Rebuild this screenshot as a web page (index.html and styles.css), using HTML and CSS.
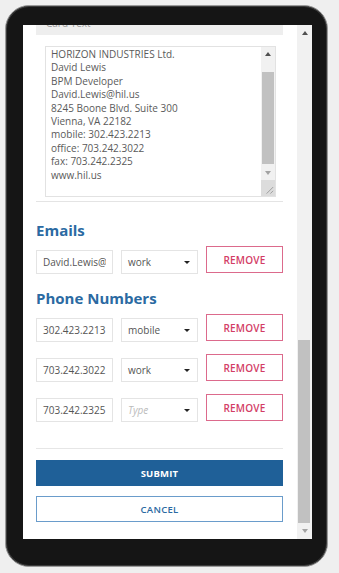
FILE: index.html
```html
<!DOCTYPE html>
<html>
<head>
<meta charset="utf-8">
<link rel="stylesheet" href="styles.css">
</head>
<body>
<div class="device">
  <div class="screen">
    <div class="content">
      <div class="card">
        <div class="card-head">Card Text</div>
        <div class="card-body">
          <div class="textarea">
            <div class="ta-text">HORIZON INDUSTRIES Ltd.<br>David Lewis<br>BPM Developer<br>David.Lewis@hil.us<br>8245 Boone Blvd. Suite 300<br>Vienna, VA 22182<br>mobile: 302.423.2213<br>office: 703.242.3022<br>fax: 703.242.2325<br>www.hil.us</div>
            <div class="ta-scroll">
              <div class="sb-btn"><span class="tri-up"></span></div>
              <div class="ta-track"><div class="ta-thumb"></div></div>
              <div class="sb-btn"><span class="tri-down"></span></div>
              <div class="resize">
                <svg width="15" height="16" viewBox="0 0 15 16"><path d="M6 14 L13 7 M10 14 L13 11" stroke="#9a9a9a" stroke-width="1" fill="none"/></svg>
              </div>
            </div>
          </div>
        </div>
      </div>

      <h2 class="section-title first">Emails</h2>
      <div class="row">
        <div class="field"><span class="clip">David.Lewis@hil.us</span></div>
        <div class="field select"><span>work</span><span class="caret"></span></div>
        <div class="btn-remove">REMOVE</div>
      </div>

      <h2 class="section-title">Phone Numbers</h2>
      <div class="row">
        <div class="field"><span>302.423.2213</span></div>
        <div class="field select"><span>mobile</span><span class="caret"></span></div>
        <div class="btn-remove">REMOVE</div>
      </div>
      <div class="row">
        <div class="field"><span>703.242.3022</span></div>
        <div class="field select"><span>work</span><span class="caret"></span></div>
        <div class="btn-remove">REMOVE</div>
      </div>
      <div class="row">
        <div class="field"><span>703.242.2325</span></div>
        <div class="field select"><span class="placeholder">Type</span><span class="caret"></span></div>
        <div class="btn-remove">REMOVE</div>
      </div>

      <div class="divider"></div>
      <div class="btn-submit">SUBMIT</div>
      <div class="btn-cancel">CANCEL</div>
    </div>
    <div class="page-scroll">
      <div class="sb-btn"><span class="tri-up"></span></div>
      <div class="track"><div class="thumb"></div></div>
      <div class="sb-btn"><span class="tri-down"></span></div>
    </div>
  </div>
</div>
</body>
</html>
```
FILE: styles.css
```css
* { box-sizing: border-box; }
html, body { margin: 0; padding: 0; }
body {
  background: #efefef;
  font-family: "Open Sans", "Liberation Sans", sans-serif;
  width: 339px;
  height: 573px;
  overflow: hidden;
}
.device {
  margin: 5px 0 0 5px;
  width: 323px;
  height: 562px;
  background: #151515;
  border: 1px solid #9a9a9a;
  box-shadow: inset 0 0 0 1px #3a3a3a;
  border-radius: 24px;
  padding: 19px 15px 27px 17px;
}
.screen {
  display: flex;
  width: 289px;
  height: 514px;
  background: #fff;
  overflow: hidden;
}
.content {
  flex: 1;
  overflow: hidden;
  padding: 0 14px 0 13px;
}
.card {
  margin-top: -14px;
  border-bottom: 1px solid #e4e4e4;
}
.card-head {
  height: 24px;
  background: #eeeeee;
  color: #9a9a9a;
  font-size: 10px;
  line-height: 24px;
  padding-left: 10px;
  overflow: hidden;
}
.card-body {
  padding: 11px 7px 4px 9px;
}
.textarea {
  display: flex;
  height: 151px;
  border: 1px solid #e2e2e2;
}
.ta-text {
  flex: 1;
  font-size: 10px;
  line-height: 13.4px;
  color: #5a5a5a;
  padding: 1px 4px 0 5px;
  white-space: nowrap;
  overflow: hidden;
}
.ta-scroll {
  width: 14px;
  display: flex;
  flex-direction: column;
  background: #f1f1f1;
}
.ta-track {
  height: 111px;
  padding-top: 11px;
}
.ta-thumb {
  height: 92px;
  margin: 0 1px;
  background: #c1c1c1;
}
.resize {
  flex: 1;
  background: #dcdcdc;
  display: flex;
  align-items: flex-end;
  justify-content: flex-end;
}
.resize svg { display: block; }
.sb-btn {
  height: 15px;
  display: flex;
  align-items: center;
  justify-content: center;
}
.tri-up {
  width: 0; height: 0;
  border-left: 3.5px solid transparent;
  border-right: 3.5px solid transparent;
  border-bottom: 4px solid #505050;
}
.tri-down {
  width: 0; height: 0;
  border-left: 3.5px solid transparent;
  border-right: 3.5px solid transparent;
  border-top: 4px solid #a3a3a3;
}
.section-title {
  margin: 13px 0 5px;
  font-size: 15px;
  line-height: 22px;
  font-weight: 700;
  color: #2b6aa2;
}
.section-title.first { margin-top: 17px; }
.row {
  display: grid;
  grid-template-columns: repeat(3, minmax(0, 1fr));
  column-gap: 8px;
  align-items: start;
  margin-bottom: 12px;
}
.field {
  height: 24px;
  margin-top: 4px;
  border: 1px solid #e4e4e4;
  font-size: 10px;
  color: #555;
  padding: 0 6px;
  display: flex;
  align-items: center;
  overflow: hidden;
  white-space: nowrap;
}
.field .clip { flex: 1; min-width: 0; overflow: hidden; }
.select { justify-content: space-between; }
.caret {
  width: 0; height: 0;
  border-left: 3px solid transparent;
  border-right: 3px solid transparent;
  border-top: 3px solid #222;
  margin-right: 1px;
}
.placeholder { color: #bbb; font-style: italic; }
.btn-remove {
  height: 27px;
  border: 1px solid #dc6a8c;
  color: #d33d66;
  font-size: 10px;
  font-weight: 600;
  letter-spacing: 0.2px;
  display: flex;
  align-items: center;
  justify-content: center;
}
.divider {
  height: 1px;
  background: #e6e6e6;
  margin-top: 26px;
}
.btn-submit {
  margin-top: 11px;
  height: 26px;
  background: #1f6098;
  color: #fff;
  font-size: 9.5px;
  font-weight: 700;
  letter-spacing: 0.2px;
  display: flex;
  align-items: center;
  justify-content: center;
}
.btn-cancel {
  margin-top: 10px;
  height: 26px;
  border: 1px solid #6a9ccb;
  color: #2b6aa2;
  font-size: 9.5px;
  font-weight: 600;
  letter-spacing: 0.3px;
  display: flex;
  align-items: center;
  justify-content: center;
}
.page-scroll {
  width: 15px;
  display: flex;
  flex-direction: column;
  background: #f1f1f1;
}
.page-scroll .sb-btn { height: 16px; }
.track {
  flex: 1;
  display: flex;
  flex-direction: column;
}
.thumb {
  margin: 299px 2px 0 1px;
  flex: 1;
  background: #c1c1c1;
}
```
